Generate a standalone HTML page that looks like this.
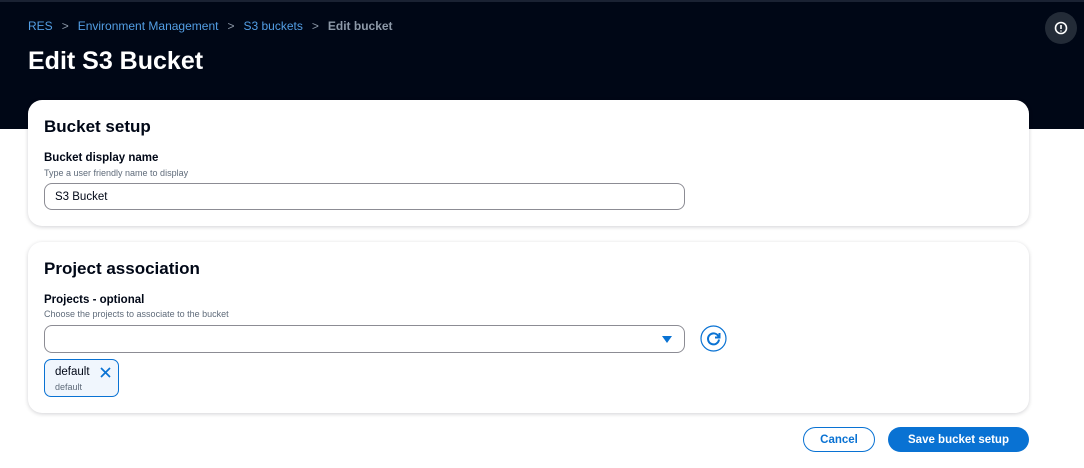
<!DOCTYPE html>
<html><head><style>
*{box-sizing:border-box;margin:0;padding:0}
body{width:1084px;height:468px;overflow:hidden;background:#fff;font-family:"Liberation Sans","DejaVu Sans",sans-serif;color:#000716;position:relative}
.hdr{position:absolute;left:0;top:0;width:1084px;height:129px;background:#000716;border-top:2px solid #1a2233}
.bc{position:absolute;left:28px;top:17px;font-size:12px;color:#539fe5;white-space:nowrap}
.bc span.s{color:#8d99a8;margin:0 9px}
.bc b{color:#8d99a8}
h1{position:absolute;left:28px;top:45px;font-size:25px;color:#fff;font-weight:bold}
.info{position:absolute;left:1045px;top:10px;width:32px;height:32px;border-radius:50%;background:#232b37}
.card{position:absolute;left:28px;width:1001px;background:#fff;border-radius:14px;box-shadow:0 1px 4px rgba(0,7,22,.18)}
.card h2{position:absolute;left:16px;font-size:17px;font-weight:bold}
.lbl{position:absolute;left:16px;font-size:11.5px;font-weight:bold}
.desc{position:absolute;left:16px;font-size:9px;color:#5f6b7a}
.inp{position:absolute;left:16px;width:641px;height:27px;border:1px solid #8c8c94;border-radius:8px;font-size:11.5px;padding:7px 10px}
.btn{position:absolute;top:427px;height:25px;border-radius:13px;font-size:11.5px;font-weight:bold;display:flex;align-items:center;justify-content:center}
</style></head><body>
<div class="hdr">
<div class="bc">RES<span class="s">&gt;</span>Environment Management<span class="s">&gt;</span>S3 buckets<span class="s">&gt;</span><b>Edit bucket</b></div>
<h1>Edit S3 Bucket</h1>
<div class="info"><svg width="32" height="32" viewBox="0 0 32 32"><circle cx="16" cy="16" r="5.5" fill="none" stroke="#fff" stroke-width="1.6"/><path d="M16 13v4M16 18.5v1" stroke="#fff" stroke-width="1.6"/></svg></div>
</div>
<div class="card" style="top:100px;height:126px">
<h2 style="top:17px">Bucket setup</h2>
<div class="lbl" style="top:52px">Bucket display name</div>
<div class="desc" style="top:68px">Type a user friendly name to display</div>
<div class="inp" style="top:83px">S3 Bucket</div>
</div>
<div class="card" style="top:242px;height:171px">
<h2 style="top:17px">Project association</h2>
<div class="lbl" style="top:52px">Projects - optional</div>
<div class="desc" style="top:67px">Choose the projects to associate to the bucket</div>
<div class="inp" style="top:83px;height:28px"><svg style="position:absolute;right:12px;top:10px" width="10" height="7"><path d="M0 0h10L5 7z" fill="#0972d3"/></svg></div>
<svg style="position:absolute;left:672px;top:83px" width="27" height="27" viewBox="0 0 27 27"><circle cx="13.5" cy="13.5" r="12.5" fill="none" stroke="#0972d3" stroke-width="1.2"/><path d="M18.5 11.5A5.5 5.5 0 1 0 19 14.5" fill="none" stroke="#0972d3" stroke-width="2"/><path d="M19.5 8v4.5H15" fill="none" stroke="#0972d3" stroke-width="2"/></svg>
<div style="position:absolute;left:16px;top:117px;width:75px;height:38px;border:1px solid #0972d3;border-radius:7px;background:#f0f6fd">
<div style="position:absolute;left:10px;top:6px;font-size:11.5px">default</div>
<div style="position:absolute;left:10px;top:22px;font-size:9px;color:#5f6b7a">default</div>
<svg style="position:absolute;left:55px;top:7px" width="11" height="11"><path d="M1 1l9 9M10 1l-9 9" stroke="#0972d3" stroke-width="1.7"/></svg>
</div>
</div>
<div class="btn" style="left:803px;width:72px;border:1.5px solid #0972d3;color:#0972d3">Cancel</div>
<div class="btn" style="left:888px;width:141px;background:#0972d3;color:#fff">Save bucket setup</div>
</body></html>
